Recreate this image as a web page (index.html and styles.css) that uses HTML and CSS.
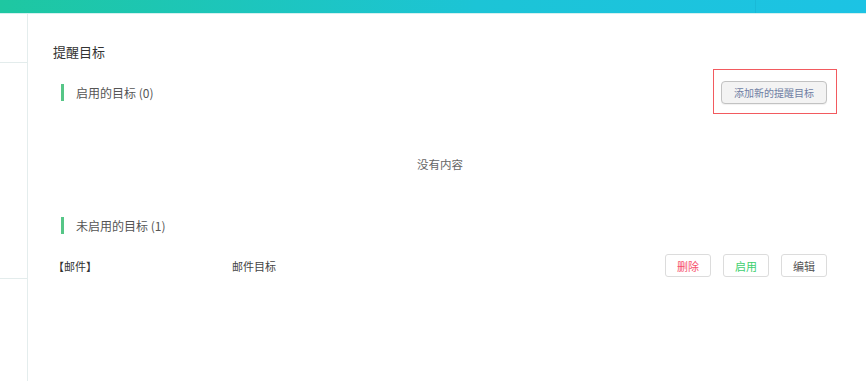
FILE: index.html
```html
<!DOCTYPE html>
<html lang="zh-CN">
<head>
<meta charset="utf-8">
<title>提醒目标</title>
<link rel="stylesheet" href="styles.css">
</head>
<body>
<header class="topbar">
  <div class="topbar-fill"></div>
  <div class="topbar-right"></div>
</header>
<div class="layout">
  <aside class="sidebar">
    <div class="side-item side-item-first"></div>
    <div class="side-item side-item-second"></div>
  </aside>
  <main class="main">
    <h1 class="page-title">提醒目标</h1>

    <div class="section-head">
      <div class="section-label"><span class="bar"></span><span>启用的目标 (0)</span></div>
      <div class="add-wrap">
        <span class="highlight"></span>
        <button class="btn-add">添加新的提醒目标</button>
      </div>
    </div>

    <div class="empty">没有内容</div>

    <div class="section-head">
      <div class="section-label"><span class="bar"></span><span>未启用的目标 (1)</span></div>
    </div>

    <div class="item-row">
      <span class="item-type">【邮件】</span>
      <span class="item-name">邮件目标</span>
      <div class="item-actions">
        <button class="btn-small btn-del">删除</button>
        <button class="btn-small btn-enable">启用</button>
        <button class="btn-small btn-edit">编辑</button>
      </div>
    </div>
  </main>
</div>
</body>
</html>
```

FILE: styles.css
```css
* { box-sizing: border-box; }
html, body {
  margin: 0;
  padding: 0;
  background: #fff;
  font-family: "Noto Sans CJK SC", "Liberation Sans", sans-serif;
  color: #333;
  overflow: hidden;
}
.topbar {
  display: flex;
  height: 14px;
  background: linear-gradient(to right, #1ec7a1, #1cc4d6 55%, #1cc3e4);
  border-bottom: 1px solid #d3f0ef;
}
.topbar-fill { flex: 1; }
.topbar-right {
  width: 111px;
  border-left: 1px solid rgba(0, 80, 120, 0.08);
}
.layout {
  display: flex;
  height: 367px;
}
.sidebar {
  width: 28px;
  border-right: 1px solid #e4eded;
  flex: none;
}
.side-item { border-bottom: 1px solid #e3ecec; }
.side-item-first { height: 49px; }
.side-item-second { height: 216px; }
.main {
  flex: 1;
  padding: 29px 39px 0 25px;
}
.page-title {
  margin: 0 0 20px;
  font-size: 13px;
  line-height: 18px;
  font-weight: normal;
  color: #333;
}
.section-head {
  display: flex;
  justify-content: space-between;
  align-items: center;
  height: 23px;
}
.section-label {
  display: flex;
  align-items: center;
  padding-left: 8px;
  font-size: 12px;
  color: #555;
}
.bar {
  width: 3px;
  height: 17px;
  background: #56c687;
  margin-right: 12px;
}
.add-wrap { position: relative; }
.highlight {
  position: absolute;
  left: -8px;
  top: -12px;
  width: 124px;
  height: 45px;
  border: 1px solid #f25a5f;
  pointer-events: none;
}
.btn-add {
  display: block;
  width: 106px;
  height: 23px;
  padding: 0;
  border: 1px solid #c2c2c2;
  border-radius: 4px;
  background: #f3f3f3;
  color: #6f7ea3;
  font-family: inherit;
  font-size: 10px;
  box-shadow: 0 1px 1px rgba(0,0,0,0.06);
}
.empty {
  padding: 51px 0 41px;
  line-height: 18px;
  text-align: center;
  font-size: 11.5px;
  color: #666;
}
.item-row {
  display: flex;
  align-items: center;
  height: 23px;
  margin-top: 17px;
  font-size: 11px;
  color: #333;
}
.item-type {
  width: 179px;
  flex: none;
}
.item-name { flex: 1; color: #444; }
.item-actions {
  display: flex;
  gap: 12px;
}
.btn-small {
  width: 46px;
  height: 23px;
  padding: 0;
  border: 1px solid #dcdcdc;
  border-radius: 3px;
  background: #fff;
  font-family: inherit;
  font-size: 11px;
}
.btn-del { color: #f6506a; }
.btn-enable { color: #3dcf6e; }
.btn-edit { color: #555; }
```
